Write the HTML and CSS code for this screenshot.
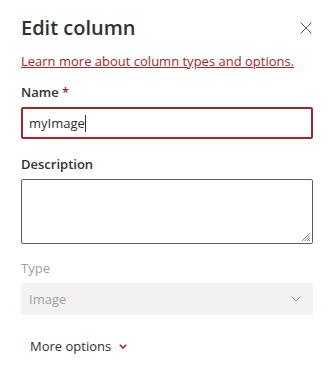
FILE: index.html
```html
<!DOCTYPE html>
<html lang="en">

<head>
    <meta charset="utf-8">
    <meta name="viewport" content="width=device-width, initial-scale=1.0">
    <title>Edit column</title>
    <link rel="stylesheet" href="styles.css">
</head>

<body>
    <div class="panel">
        <header class="head">
            <h2 class="title">Edit column</h2>
            <button class="close" aria-label="Close">
                <svg width="12" height="12" viewBox="0 0 12 12">
                    <path d="M0.5 0.5 L11.5 11.5 M11.5 0.5 L0.5 11.5" stroke="#605e5c" stroke-width="1" fill="none" />
                </svg>
            </button>
        </header>
        <a href="#" class="learn">Learn more about column types and options.</a>

        <div class="field name">
            <label class="label">Name <span class="req">*</span></label>
            <div class="input focused">myImage<span class="caret"></span></div>
        </div>

        <div class="field desc">
            <label class="label">Description</label>
            <div class="textarea">
                <svg class="grip" width="10" height="10" viewBox="0 0 10 10">
                    <path d="M9 1 L1 9 M9 3.5 L3.5 9 M9 6 L6 9 M9 8 L8 9" stroke="#8a8886" stroke-width="1" fill="none" />
                </svg>
            </div>
        </div>

        <div class="field type">
            <label class="label disabled">Type</label>
            <div class="dropdown">
                <span>Image</span>
                <svg width="10" height="6" viewBox="0 0 10 6">
                    <path d="M0.5 0.5 L5 5 L9.5 0.5" stroke="#a19f9d" stroke-width="1" fill="none" />
                </svg>
            </div>
        </div>

        <button class="more">More options
            <svg width="8" height="5" viewBox="0 0 8 5">
                <path d="M0.8 0.8 L4 4 L7.2 0.8" stroke="#a4262c" stroke-width="1.6" fill="none" />
            </svg>
        </button>
    </div>
</body>

</html>
```

FILE: styles.css
```css
body {
    margin: 0;
    padding: 0;
    background: #ffffff;
    font-family: 'Open Sans', sans-serif;
    color: #323130;
}

.panel {
    padding: 14px 22px 0 21px;
}

.head {
    display: flex;
    justify-content: space-between;
    align-items: center;
}

.title {
    margin: 0;
    font-size: 20px;
    line-height: 28px;
    font-weight: 600;
    color: #323130;
}

.close {
    border: 0;
    background: none;
    padding: 0;
    margin-right: 1px;
    display: flex;
}

.learn {
    display: block;
    margin-top: 10px;
    font-size: 13px;
    line-height: 18px;
    color: #a4262c;
}

.field.name {
    margin-top: 12px;
}

.field.desc {
    margin-top: 15px;
}

.field.type {
    margin-top: 14px;
}

.label {
    display: block;
    font-size: 13px;
    line-height: 20px;
    font-weight: 600;
    margin-bottom: 5px;
}

.label.disabled {
    font-weight: 400;
    color: #a19f9d;
}

.req {
    color: #a4262c;
}

.input {
    box-sizing: border-box;
    height: 32px;
    border: 2px solid #a4262c;
    border-radius: 2px;
    padding: 0 6px;
    font-size: 13px;
    line-height: 28px;
    display: flex;
    align-items: center;
}

.caret {
    display: inline-block;
    width: 1px;
    height: 17px;
    background: #323130;
}

.textarea {
    position: relative;
    box-sizing: border-box;
    height: 65px;
    border: 1px solid #605e5c;
    border-radius: 2px;
}

.grip {
    position: absolute;
    right: 1px;
    bottom: 1px;
}

.dropdown {
    box-sizing: border-box;
    height: 32px;
    background: #f3f2f1;
    border-radius: 2px;
    padding: 0 12px 0 8px;
    display: flex;
    justify-content: space-between;
    align-items: center;
    font-size: 13px;
    color: #a19f9d;
}

.more {
    margin-top: 22px;
    margin-left: 9px;
    border: 0;
    background: none;
    padding: 0;
    font-family: 'Open Sans', sans-serif;
    font-size: 13px;
    color: #323130;
    display: flex;
    align-items: center;
    gap: 8px;
}
```
